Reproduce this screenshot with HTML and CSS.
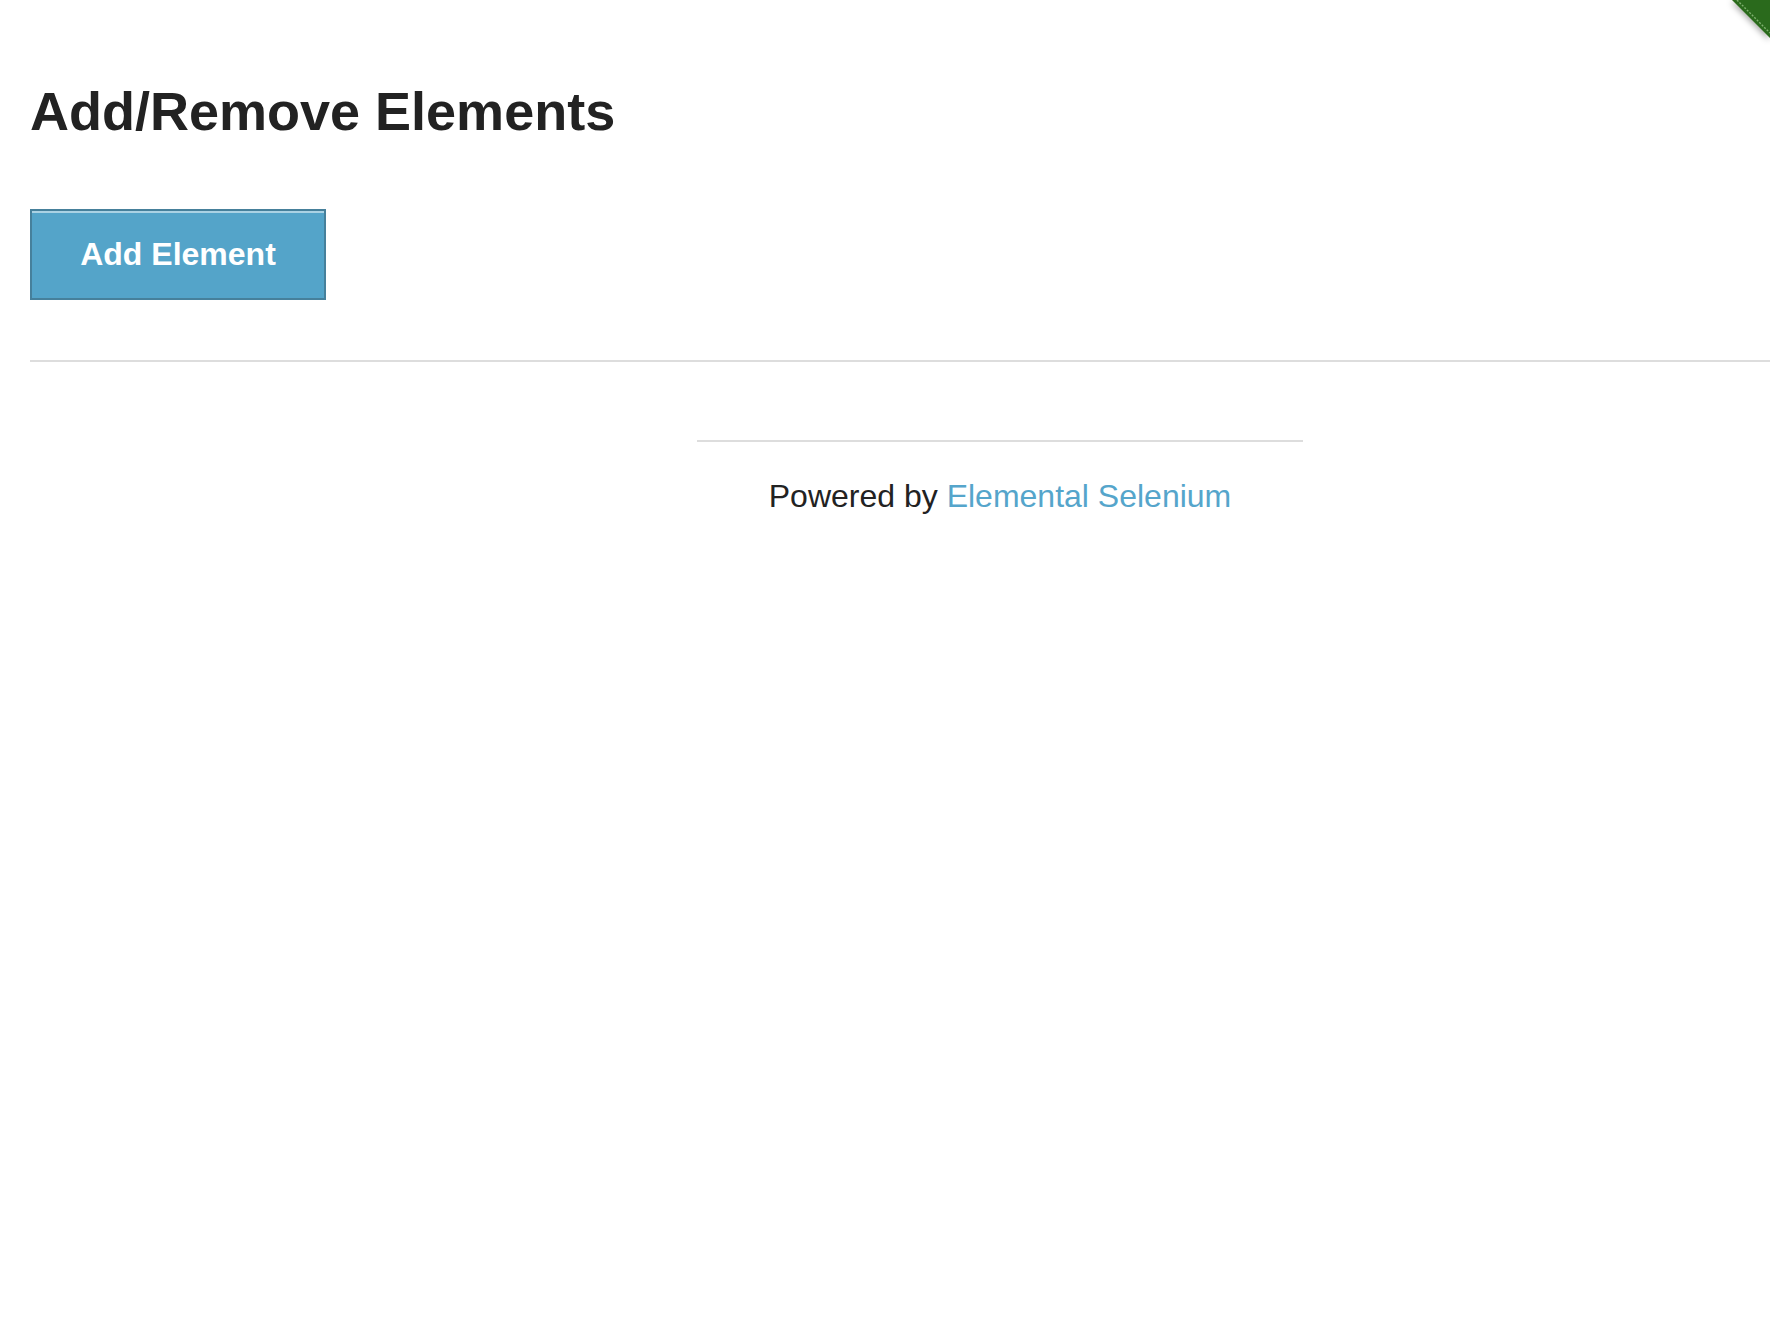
FILE: index.html
```html
<!DOCTYPE html>
<html lang="en">
<head>
<meta charset="utf-8">
<title>The Internet</title>
<link rel="stylesheet" href="styles.css">
</head>
<body>
<div class="viewport">
  <svg class="ribbon" width="70" height="70" viewBox="0 0 70 70" aria-hidden="true">
    <defs>
      <filter id="sh" x="-50%" y="-50%" width="200%" height="200%">
        <feDropShadow dx="-1" dy="2" stdDeviation="3" flood-color="#000" flood-opacity="0.35"/>
      </filter>
    </defs>
    <polygon points="32,0 70,0 70,38" fill="#2a6b1d" filter="url(#sh)"/>
    <line x1="37" y1="0" x2="70" y2="33" stroke="#7fb06f" stroke-width="1.4" stroke-dasharray="2 1.5"/>
  </svg>
  <div class="page">
    <div class="example">
      <h3 class="title">Add/Remove Elements</h3>
      <button class="add-btn" type="button">Add Element</button>
      <div class="elements"></div>
    </div>
    <hr class="rule">
    <div class="footer-row">
      <div class="footer-col">
        <hr class="footer-rule">
        <div class="powered">Powered by <a class="link" href="#">Elemental Selenium</a></div>
      </div>
    </div>
  </div>
</div>
</body>
</html>
```

FILE: styles.css
```css
html, body {
  margin: 0;
  padding: 0;
  background: #fff;
}
body {
  font-family: "Liberation Sans", Arial, sans-serif;
  color: #222;
}
.viewport {
  position: relative;
  width: 1770px;
  min-height: 1320px;
  overflow: hidden;
}
.ribbon {
  position: absolute;
  top: 0;
  right: 0;
}
.page {
  width: 1940px;
  padding-left: 30px;
  padding-top: 79px;
}
.example {
  display: flex;
  flex-direction: column;
  align-items: flex-start;
}
.title {
  margin: 0;
  font-size: 54px;
  line-height: 64px;
  font-weight: bold;
  color: #222;
}
.add-btn {
  margin-top: 66px;
  height: 91px;
  width: 296px;
  padding: 0;
  border: 2px solid #46809b;
  box-shadow: inset 0 2px 0 rgba(255, 255, 255, 0.5);
  background: #54a4c9;
  color: #fff;
  font-family: "Liberation Sans", Arial, sans-serif;
  font-weight: bold;
  font-size: 32px;
  line-height: 87px;
  text-align: center;
  cursor: pointer;
}
.rule {
  margin: 60px 0 0 0;
  border: 0;
  height: 2px;
  background: #ddd;
  width: 1940px;
}
.footer-row {
  width: 1940px;
  display: flex;
  justify-content: center;
}
.footer-col {
  width: 606px;
  margin-top: 78px;
}
.footer-rule {
  margin: 0;
  border: 0;
  height: 2px;
  background: #ddd;
}
.powered {
  margin-top: 34px;
  text-align: center;
  font-size: 32px;
  line-height: 40px;
  color: #222;
}
.link {
  color: #55a5cb;
  text-decoration: none;
}
```
